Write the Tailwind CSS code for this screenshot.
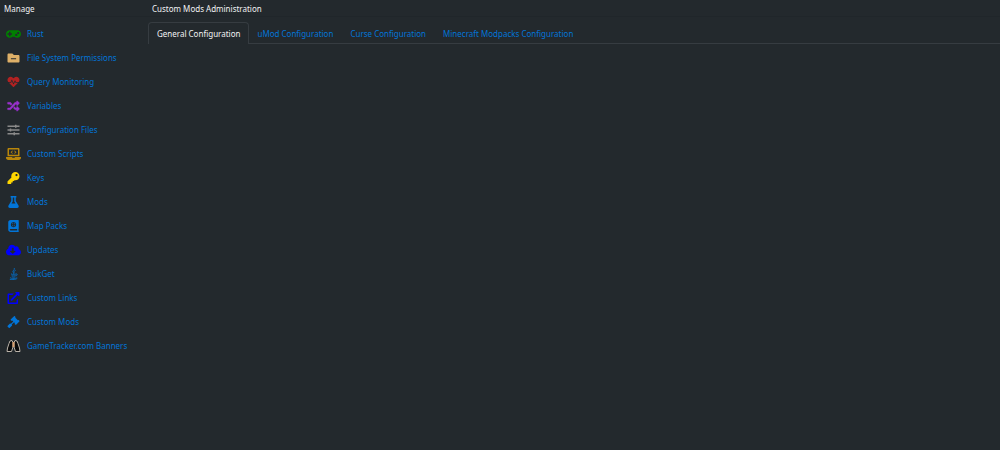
<!DOCTYPE html>
<html lang="en">
<head>
    <meta charset="UTF-8">
    <meta name="viewport" content="width=device-width, initial-scale=1.0">
    <title>Custom Mods Administration</title>
    <script src="https://cdn.jsdelivr.net/npm/@tailwindcss/browser@4"></script>
</head>
<body class="min-h-screen bg-[#23292d] font-['Noto_Sans',sans-serif] text-[8px] leading-4 text-[#0275d8]">
    <div class="flex min-h-screen">
        <aside class="w-[148px] shrink-0">
            <h2 class="h-[17px] border-b border-[#20262a] px-1 pt-px text-[#f1f2f3]">Manage</h2>
            <nav class="flex flex-col pt-[5px]">
                <a href="#" class="flex h-6 items-center gap-[6px] pl-[6px]">
                    <svg class="h-3 w-[15px] text-[#008000]" viewBox="0 0 640 512" fill="currentColor"><path d="M480 96H160C71.6 96 0 167.6 0 256s71.6 160 160 160c44.8 0 85.2-18.4 114.2-48h91.5c29 29.6 69.5 48 114.2 48 88.4 0 160-71.6 160-160S568.4 96 480 96zM256 276c0 6.6-5.4 12-12 12h-52v52c0 6.6-5.4 12-12 12h-40c-6.6 0-12-5.4-12-12v-52H76c-6.6 0-12-5.4-12-12v-40c0-6.6 5.4-12 12-12h52v-52c0-6.6 5.4-12 12-12h40c6.6 0 12 5.4 12 12v52h52c6.6 0 12 5.4 12 12v40zm184 68c-26.5 0-48-21.5-48-48s21.5-48 48-48 48 21.5 48 48-21.5 48-48 48zm80-80c-26.5 0-48-21.5-48-48s21.5-48 48-48 48 21.5 48 48-21.5 48-48 48z"/></svg>
                    Rust
                </a>
                <a href="#" class="flex h-6 items-center gap-[6px] pl-[6px]">
                    <svg class="h-3 w-[15px] text-[#deb068]" viewBox="0 0 512 512" fill="currentColor"><path d="M464 128H272l-64-64H48C21.5 64 0 85.5 0 112v288c0 26.5 21.5 48 48 48h416c26.5 0 48-21.5 48-48V176c0-26.5-21.5-48-48-48zm-96 168c0 8.8-7.2 16-16 16H160c-8.8 0-16-7.2-16-16v-16c0-8.8 7.2-16 16-16h192c8.8 0 16 7.2 16 16v16z"/></svg>
                    File System Permissions
                </a>
                <a href="#" class="flex h-6 items-center gap-[6px] pl-[6px]">
                    <svg class="h-3 w-[15px] text-[#b22222]" viewBox="0 0 512 512" fill="currentColor"><path d="M320.2 243.8l-49.7 99.4c-6 12.1-23.4 11.7-28.9-.6l-56.9-126.3-30 71.7H60.6l182.5 186.5c7.1 7.3 18.6 7.3 25.7 0L451.4 288H342.3l-22.1-44.2zM473.7 73.9l-2.4-2.5c-51.5-52.6-135.8-52.6-187.4 0L256 100l-27.9-28.5c-51.5-52.7-135.9-52.7-187.4 0l-2.4 2.4C-10.4 123.7-12.5 203 31 256h102.4l35.9-86.2c5.4-12.9 23.6-13.2 29.4-.4l58.2 129.3 49-97.9c5.9-11.8 22.7-11.8 28.6 0l27.6 55.2H481c43.5-53 41.4-132.3-7.3-182.1z"/></svg>
                    Query Monitoring
                </a>
                <a href="#" class="flex h-6 items-center gap-[6px] pl-[6px]">
                    <svg class="h-3 w-[15px] text-[#9932cc]" viewBox="0 0 512 512" fill="currentColor" stroke="currentColor" stroke-width="12"><path d="M504.971 359.029c9.373 9.373 9.373 24.569 0 33.941l-80 79.984c-15.01 15.01-40.971 4.49-40.971-16.971V416h-58.785a12.004 12.004 0 0 1-8.773-3.812l-70.556-75.596 53.333-57.143L352 336h32v-39.981c0-21.438 25.943-31.998 40.971-16.971l80 79.981zM12 176h84l52.781 56.551 53.333-57.143-70.556-75.596A11.999 11.999 0 0 0 122.785 96H12c-6.627 0-12 5.373-12 12v56c0 6.627 5.373 12 12 12zm372 0v39.984c0 21.46 25.961 31.98 40.971 16.971l80-79.984c9.373-9.373 9.373-24.569 0-33.941l-80-79.981C409.943 24.021 384 34.582 384 56.019V96h-58.785a12.004 12.004 0 0 0-8.773 3.812L96 336H12c-6.627 0-12 5.373-12 12v56c0 6.627 5.373 12 12 12h110.785c3.326 0 6.503-1.381 8.773-3.812L352 176h32z"/></svg>
                    Variables
                </a>
                <a href="#" class="flex h-6 items-center gap-[6px] pl-[6px]">
                    <svg class="h-3 w-[15px] text-[#8a8a8a]" viewBox="0 0 512 512" fill="currentColor"><path d="M0 64h320V32h64v32h128v64H384v32h-64v-32H0zM0 224h96v-32h64v32h352v64H160v32H96v-32H0zM0 384h256v-32h64v32h192v64H320v32h-64v-32H0z"/></svg>
                    Configuration Files
                </a>
                <a href="#" class="flex h-6 items-center gap-[6px] pl-[6px]">
                    <svg class="h-3 w-[15px] text-[#b8860b]" viewBox="0 0 640 512" fill="currentColor"><path fill-rule="evenodd" d="M112 0h416c26 0 48 22 48 48v304H64V48C64 22 86 0 112 0zm16 64v224h384V64zM0 384h255c2 20 14 32 33 32h64c19 0 32-12 33-32h255v32c0 53-43 96-96 96H96c-53 0-96-43-96-96z"/><path d="M268 102l24 24-50 50 50 50-24 24-74-74zM372 102l-24 24 50 50-50 50 24 24 74-74z"/></svg>
                    Custom Scripts
                </a>
                <a href="#" class="flex h-6 items-center gap-[6px] pl-[6px]">
                    <svg class="h-3 w-[15px] text-[#ffd700]" viewBox="0 0 512 512" fill="currentColor"><path d="M512 176.001C512 273.203 433.202 352 336 352c-11.22 0-22.19-1.062-32.827-3.069l-24.012 27.014A23.999 23.999 0 0 1 261.223 384H224v40c0 13.255-10.745 24-24 24h-40v40c0 13.255-10.745 24-24 24H24c-13.255 0-24-10.745-24-24v-78.059c0-6.365 2.529-12.47 7.029-16.971l161.802-161.802C163.108 213.814 160 195.271 160 176 160 78.798 238.797.001 335.999 0 433.488-.001 512 78.511 512 176.001zM336 128c0 26.51 21.49 48 48 48s48-21.49 48-48-21.49-48-48-48-48 21.49-48 48z"/></svg>
                    Keys
                </a>
                <a href="#" class="flex h-6 items-center gap-[6px] pl-[6px]">
                    <svg class="h-3 w-[15px] text-[#0275d8]" viewBox="0 0 448 512" fill="currentColor"><path d="M437.2 403.5L320 215V64h8c13.3 0 24-10.7 24-24V24c0-13.3-10.7-24-24-24H120c-13.3 0-24 10.7-24 24v16c0 13.3 10.7 24 24 24h8v151L10.8 403.5C-18.5 450.6 15.3 512 70.9 512h306.2c55.7 0 89.4-61.5 60.1-108.5zM137.9 320l48.2-77.6c3.7-5.2 5.8-11.6 5.8-18.4V64h64v160c0 6.9 2.2 13.2 5.8 18.4l48.2 77.6h-172z"/></svg>
                    Mods
                </a>
                <a href="#" class="flex h-6 items-center gap-[6px] pl-[6px]">
                    <svg class="h-3 w-[15px] text-[#0275d8]" viewBox="0 0 448 512" fill="currentColor"><path fill-rule="evenodd" d="M96 0h328c13 0 24 11 24 24v336c0 8-4 15-9 19-4 15-4 54 0 69 6 4 9 10 9 18v22c0 13-11 24-24 24H96c-53 0-96-43-96-96V96C0 43 43 0 96 0zm0 384c-42 0-42 64 0 64h286c-2-17-2-47 0-64zM224 80a112 112 0 1 0 0 224 112 112 0 1 0 0-224z"/><path d="M208 96c-30 10-44 44-47 80h47zM240 96c30 10 44 44 47 80h-47zM208 288c-30-10-44-44-47-80h47zM240 288c30-10 44-44 47-80h-47zM129 176c3-27 17-49 38-64-12 18-20 40-22 64zM319 176c-3-27-17-49-38-64 12 18 20 40 22 64z" opacity=".6"/></svg>
                    Map Packs
                </a>
                <a href="#" class="flex h-6 items-center gap-[6px] pl-[6px]">
                    <svg class="h-3 w-[15px] text-[#0000ff]" viewBox="0 0 640 512" fill="currentColor"><path d="M537.6 226.6c4.1-10.7 6.4-22.4 6.4-34.6 0-53-43-96-96-96-19.7 0-38.1 6-53.3 16.2C367 64.2 315.3 32 256 32c-88.4 0-160 71.6-160 160 0 2.7.1 5.4.2 8.1C40.2 219.8 0 273.2 0 336c0 79.5 64.5 144 144 144h368c70.7 0 128-57.3 128-128 0-61.9-44-113.6-102.4-125.4zm-132.9 88.7L299.3 420.7c-6.2 6.2-16.4 6.2-22.6 0L171.3 315.3c-10.1-10.1-2.9-27.3 11.3-27.3H248V176c0-8.8 7.2-16 16-16h48c8.8 0 16 7.2 16 16v112h65.4c14.2 0 21.4 17.2 11.3 27.3z"/></svg>
                    Updates
                </a>
                <a href="#" class="flex h-6 items-center gap-[6px] pl-[6px]">
                    <svg class="h-3 w-[15px] text-[#0275d8]" viewBox="0 0 384 512" fill="none" stroke="currentColor" stroke-width="32" stroke-linecap="round"><path d="M232 12c38 70-98 96-62 158 10 18 24 28 30 50M270 106c-50 26-78 50-56 80 14 20 12 34-6 48M92 250c-50 24 100 34 206 8M112 312c-10 30 100 34 156 10M124 372c-4 26 80 30 130 8M304 258c70-18 76 52 0 76M76 408c-110 36 170 64 242 16M350 448c-30 50-210 54-300 40"/></svg>
                    BukGet
                </a>
                <a href="#" class="flex h-6 items-center gap-[6px] pl-[6px]">
                    <svg class="h-3 w-[15px] text-[#0000ff]" viewBox="0 0 512 512" fill="currentColor"><path d="M448 288v176c0 26-22 48-48 48H48c-26 0-48-22-48-48V112c0-26 22-48 48-48h224l-64 64H64v320h320V352zM488 0c13 0 24 11 24 24v128c0 21-26 32-41 17l-36-36-243 244c-9 9-25 9-34 0l-23-23c-9-9-9-25 0-34L379 77l-36-36c-15-15-4-41 17-41z"/></svg>
                    Custom Links
                </a>
                <a href="#" class="flex h-6 items-center gap-[6px] pl-[6px]">
                    <svg class="h-3 w-[15px] text-[#0275d8]" viewBox="0 0 512 512" fill="currentColor"><path d="M505 200l-23-23c-9-9-25-9-34 0l-5 6L329 69l6-5c9-9 9-25 0-34L312 7c-9-9-25-9-34 0L143 143c-10 9-10 24 0 34l22 22c10 10 25 10 34 0l6-5 40 39-98 98-6-5c-12-13-33-13-45 0L9 412c-12 13-12 33 0 46l45 45c13 12 33 12 46 0l86-87c13-12 13-33 0-45l-5-6 98-98 39 40-5 6c-10 9-10 24 0 34l22 22c10 10 25 10 34 0l136-135c9-9 9-25 0-34z"/></svg>
                    Custom Mods
                </a>
                <a href="#" class="flex h-6 items-center gap-[6px] pl-[6px]">
                    <svg class="h-[14px] w-[15px]" viewBox="0 0 28 28" fill="#08090a" stroke="#b9b2a8" stroke-width="2"><path d="M7 4l4-1 2 4v9l-3 9H1L2 18 5 9zM21 4l-4-1-2 4v9l3 9h9l-1-7-3-9z"/><path d="M12 6h4v10h-4z" fill="#d8a070" stroke="none"/></svg>
                    GameTracker.com Banners
                </a>
            </nav>
        </aside>
        <main class="min-w-0 flex-1">
            <h1 class="h-[17px] border-b border-[#20262a] px-1 pt-px text-[#f1f2f3]">Custom Mods Administration</h1>
            <nav class="mt-[5px] flex h-[22px] border-b border-[#363c41]">
                <a href="#" class="-mb-px rounded-t border border-b-0 border-[#363c41] bg-[#23292d] px-2 pt-[3px] text-[#f1f2f3]">General Configuration</a>
                <a href="#" class="border-t border-r border-transparent px-2 pt-[3px]">uMod Configuration</a>
                <a href="#" class="border-t border-r border-transparent px-2 pt-[3px]">Curse Configuration</a>
                <a href="#" class="border-t border-r border-transparent px-2 pt-[3px]">Minecraft Modpacks Configuration</a>
            </nav>
        </main>
    </div>
</body>
</html>
